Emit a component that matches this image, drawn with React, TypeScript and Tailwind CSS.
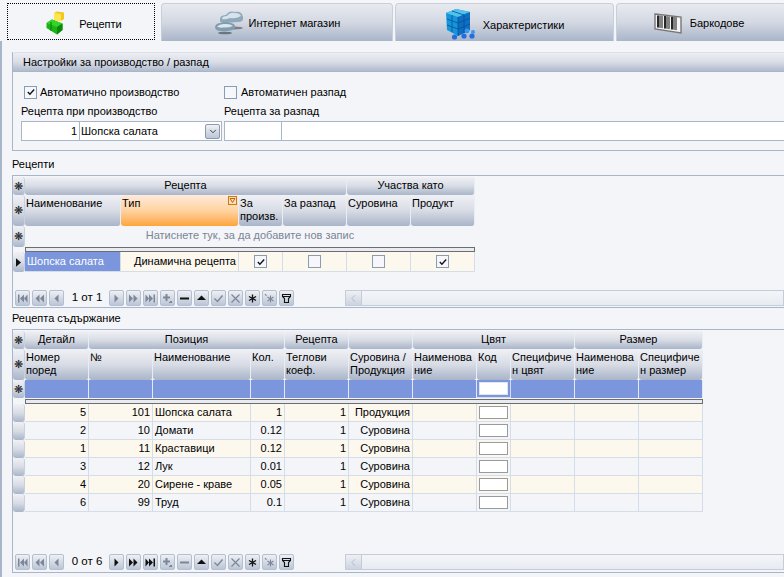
import React from "react";

const hdr = "bg-gradient-to-b from-[#f0f1f5] via-[#d8dce5] to-[#a9b5c9] rounded-[3px]";

function CheckBox({ on, size = "w-[13px] h-[13px]" }: { on?: boolean; size?: string }) {
  return (
    <span className={`${size} border border-[#8a9bb4] bg-[#f6f7fa] flex items-center justify-center shrink-0`}>
      {on && (
        <svg viewBox="0 0 11 11" className="w-[10px] h-[10px]">
          <path d="M2 5.5 L4.3 8 L9 2.8" fill="none" stroke="#111" strokeWidth="1.5" />
        </svg>
      )}
    </span>
  );
}

function CubesIcon() {
  return (
    <svg viewBox="0 0 19 24" className="w-[19px] h-[24px]">
      <path d="M8 2 L11 0.5 L18 1.5 L18 8 L15 10 L8 9Z" fill="#f2c81a" />
      <path d="M8 2 L15 3 L18 1.5 L15 3 L15 10 L8 9Z" fill="#ffe450" />
      <path d="M0.5 12 L6 8.5 L16.5 12.5 L16.5 19 L11 23.5 L0.5 17Z" fill="#1bb414" />
      <path d="M0.5 12 L11 16 L16.5 12.5 L6 8.5Z" fill="#35d42a" />
      <path d="M11 16 L16.5 12.5 L16.5 19 L11 23.5Z" fill="#0a8a0c" />
      <path d="M5 11 L5 20" stroke="#0a7a0c" strokeWidth="1" />
    </svg>
  );
}
function CloudIcon() {
  return (
    <svg viewBox="0 0 30 25" className="w-[30px] h-[25px]">
      <ellipse cx="20" cy="18" rx="9" ry="1.5" fill="#7a7f88" />
      <path d="M6 11 Q5 5 12 5 Q15 0 21 2 Q28 1 29 7 Q30 12 24 12 L10 13 Q6 13 6 11Z" fill="#8fa9ba" />
      <path d="M8 9 Q8 6 13 6 Q16 2 21 3 Q26 3 27 6 Q22 9 16 8 Q11 10 8 9Z" fill="#d6e3ea" />
      <path d="M1 18 Q1 13 7 13 Q12 11 17 13 Q22 14 21 18 Q19 21 12 21 Q3 22 1 18Z" fill="#7f9dae" />
      <path d="M3 16.5 Q6 13.5 11 14 Q16 13.5 19 16 Q14 18 9 17.5 Q5 18 3 16.5Z" fill="#dbe7ed" />
      <ellipse cx="11" cy="23" rx="7" ry="1.3" fill="#6c7680" />
    </svg>
  );
}
function BlueCube() {
  return (
    <svg viewBox="0 0 32 32" className="w-[32px] h-[32px]">
      <path d="M1 5 L11 1 L25 4 L25 22 L13 28 L2 22Z" fill="#1596d8" />
      <path d="M1 5 L13 9 L25 4 L11 1Z" fill="#4fc3ec" />
      <path d="M13 9 L25 4 L25 22 L13 28Z" fill="#0d6fc0" />
      <path d="M7 3 L19 7 M7 7 L7 24 M13 9 L13 28 M19 7 L19 25 M2 11 L13 15 L25 10 M2 17 L13 21 L25 16" stroke="#0a4f9c" strokeWidth="0.8" fill="none" />
      <circle cx="9.5" cy="29" r="2.6" fill="#1f6fe0" />
      <circle cx="19" cy="28" r="2.6" fill="#1f6fe0" />
      <circle cx="27" cy="28" r="2.6" fill="#1f6fe0" />
      <circle cx="22" cy="23" r="2.4" fill="#3c96ee" />
      <circle cx="28" cy="24" r="2" fill="#3c96ee" />
    </svg>
  );
}
function BarcodeIcon() {
  const bars = [4, 6, 8, 11, 13, 15, 18, 20, 22];
  return (
    <svg viewBox="0 0 28 22" className="w-[28px] h-[22px]">
      <path d="M1 2 L27 5 L27 21 L1 17Z" fill="#f4f4f4" stroke="#777" strokeWidth="1.4" />
      {bars.map((x, i) => (
        <path key={x} d={`M${x} ${3 + x * 0.1} L${x} ${15 + x * 0.14}`} stroke="#111" strokeWidth={i % 3 === 0 ? 1.8 : 1} />
      ))}
    </svg>
  );
}

function Tab({ w, active, icon, label, iconBox, gap }: { w: string; active?: boolean; icon: React.ReactNode; label: string; iconBox: string; gap: string }) {
  const inner = (
    <>
      <span className={`${iconBox} flex items-center justify-center shrink-0`}>{icon}</span>
      <span className="pt-[2px]">{label}</span>
    </>
  );
  if (active) {
    return (
      <div className={`${w} shrink-0 h-[38px] mt-[3px] bg-[#f3f5f8] rounded-t-[4px] px-[4px] pb-[1px]`}>
        <div className={`h-full border border-dotted border-black flex items-center justify-center ${gap}`}>{inner}</div>
      </div>
    );
  }
  return (
    <div className={`${w} shrink-0 h-[38px] mt-[3px] flex items-center justify-center rounded-t-[4px] border border-b-0 border-[#c8cfdb] bg-gradient-to-b from-[#e8eaef] via-[#d3d8e2] to-[#a9b5c9] ${gap}`}>
      {inner}
    </div>
  );
}

const G1 = "grid-cols-[12px_96px_118px_44px_64px_64px_64px]";
const G2 = "grid-cols-[12px_64px_64px_98px_34px_64px_64px_64px_34px_64px_64px_64px]";

function HeadCell({ children, span, orange, filter }: { children?: React.ReactNode; span?: string; orange?: boolean; filter?: boolean }) {
  return (
    <div
      className={`${span ?? ""} relative border-r border-[#e8edf4] rounded-[3px] px-[1px] leading-[13px] pt-[2px] ${
        orange ? "bg-gradient-to-b from-[#ffeadb] via-[#ffd3a0] to-[#ffa436]" : hdr
      }`}
    >
      {children}
      {filter && (
        <span className="absolute right-[1px] top-[1px] w-[9px] h-[9px] border border-[#c87a20] bg-[#ffe2b0] flex items-center justify-center">
          <svg viewBox="0 0 7 7" className="w-[7px] h-[7px]"><path d="M1 1.5 H6 L3.5 5.5Z" fill="none" stroke="#c0601a" strokeWidth="1" /></svg>
        </span>
      )}
    </div>
  );
}

function Band({ children, span }: { children?: React.ReactNode; span: string }) {
  return <div className={`${span} ${hdr} border-r border-[#e8edf4] flex items-center justify-center pb-[2px]`}>{children}</div>;
}

function Indicator({ kind }: { kind?: "star" | "arrow" }) {
  return (
    <div className={`${hdr} border-r border-[#c8d0dc] flex items-center justify-center text-[9px] leading-none`}>
      {kind === "star" && <span className="text-[11px] leading-none text-[#222]">❋</span>}
      {kind === "arrow" && (
        <svg viewBox="0 0 6 10" className="w-[5px] h-[9px]"><path d="M0 0 L6 5 L0 10Z" fill="#111" /></svg>
      )}
    </div>
  );
}

function Sep() {
  return <div className="h-[5px] border border-[#6e6e6e] bg-[#e8ecf2]" />;
}

const navPaths: Record<string, React.ReactNode> = {
  first: <path d="M1 1.5 H2.5 V9.5 H1Z M7 1.5 L3 5.5 L7 9.5Z M10.5 1.5 L7 5.5 L10.5 9.5Z" />,
  prevPage: <path d="M5.5 1.5 L1.5 5.5 L5.5 9.5Z M10 1.5 L6 5.5 L10 9.5Z" />,
  prev: <path d="M7.5 1.5 L3.5 5.5 L7.5 9.5Z" />,
  next: <path d="M3.5 1.5 L7.5 5.5 L3.5 9.5Z" />,
  nextPage: <path d="M1 1.5 L5 5.5 L1 9.5Z M5.5 1.5 L9.5 5.5 L5.5 9.5Z" />,
  last: <path d="M0.5 1.5 L4 5.5 L0.5 9.5Z M4 1.5 L8 5.5 L4 9.5Z M8.5 1.5 H10 V9.5 H8.5Z" />,
  add: <path d="M3.5 1 H5.5 V3.5 H8 V5.5 H5.5 V8 H3.5 V5.5 H1 V3.5 H3.5Z M8 8 H10 V10 H7 V9 H8Z" />,
  minus: <path d="M1 4.5 H10 V6.5 H1Z" />,
  up: <path d="M5.5 2.5 L10 7 H1Z" />,
  check: <path d="M1.5 5.5 L4.5 8.5 L9.5 2.5" fill="none" stroke="currentColor" strokeWidth="1.4" />,
  x: <path d="M1.5 1.5 L9.5 9.5 M9.5 1.5 L1.5 9.5" fill="none" stroke="currentColor" strokeWidth="1.2" />,
  star: <path d="M5.5 1.5 V9.5 M2 3.5 L9 7.5 M9 3.5 L2 7.5" fill="none" stroke="currentColor" strokeWidth="1.3" />,
  star2: <path d="M6.5 2.5 V9.5 M3.5 4 L9.5 8 M9.5 4 L3.5 8 M1 1 L2.5 3" fill="none" stroke="currentColor" strokeWidth="1.1" />,
  filter: <path d="M1.5 1.5 H9.5 V3.5 L7.5 5.5 V9.5 H3.5 V5.5 L1.5 3.5Z M1.5 3.5 H9.5" fill="none" stroke="currentColor" strokeWidth="1.1" />,
};

function NavBtn({ name, on }: { name: string; on?: boolean }) {
  return (
    <span
      className={`w-[15px] h-[16px] mr-[2px] shrink-0 rounded-[2px] border border-[#b4bfd0] bg-gradient-to-b from-[#eef0f4] to-[#bcc6d6] flex items-center justify-center ${
        on ? "text-[#111]" : "text-[#7d8799]"
      }`}
    >
      <svg viewBox="0 0 11 11" className="w-[11px] h-[11px]" fill="currentColor">
        {navPaths[name]}
      </svg>
    </span>
  );
}

function Navigator({ text, nextOn, minusOn }: { text: string; nextOn?: boolean; minusOn?: boolean }) {
  return (
    <div className="flex items-center h-[16px] mb-[1px] pl-[2px]">
      <NavBtn name="first" />
      <NavBtn name="prevPage" />
      <NavBtn name="prev" />
      <span className="w-[42px] text-center text-[11.5px] text-black mr-[1px] whitespace-nowrap">{text}</span>
      <NavBtn name="next" on={nextOn} />
      <NavBtn name="nextPage" on={nextOn} />
      <NavBtn name="last" on={nextOn} />
      <NavBtn name="add" />
      <NavBtn name="minus" on={minusOn} />
      <NavBtn name="up" on />
      <NavBtn name="check" />
      <NavBtn name="x" />
      <NavBtn name="star" on />
      <NavBtn name="star2" />
      <NavBtn name="filter" on />
      <div className="ml-[49px] flex-1 h-[16px] border border-[#c4ccd9] bg-white flex">
        <span className="w-[16px] border-r border-[#c4ccd9] bg-gradient-to-b from-[#eef0f4] to-[#cdd4e0] flex items-center justify-center">
          <svg viewBox="0 0 6 10" className="w-[5px] h-[9px]"><path d="M5 1 L1 5 L5 9" fill="none" stroke="#a9b2c2" /></svg>
        </span>
        <span className="flex-1 bg-gradient-to-b from-[#f4f5f8] to-[#e7ebf1]" />
      </div>
    </div>
  );
}

const data = [
  ["5", "101", "Шопска салата", "1", "1", "Продукция"],
  ["2", "10", "Домати", "0.12", "1", "Суровина"],
  ["1", "11", "Краставици", "0.12", "1", "Суровина"],
  ["3", "12", "Лук", "0.01", "1", "Суровина"],
  ["4", "20", "Сирене - краве", "0.05", "1", "Суровина"],
  ["6", "99", "Труд", "0.1", "1", "Суровина"],
];

function Td({ children, cls }: { children?: React.ReactNode; cls?: string }) {
  return <div className={`border-r border-b border-[#d5dde9] flex items-center px-[2px] whitespace-nowrap overflow-hidden ${cls ?? ""}`}>{children}</div>;
}

function ColorBox({ white, bg }: { white?: boolean; bg?: string }) {
  return (
    <div className={`border-r border-b border-[#d5dde9] flex items-center justify-center ${bg ?? ""}`}>
      <span className={`w-[29px] h-[13px] bg-white border ${white ? "border-[#dfe5f0]" : "border-[#9a9a9a]"}`} />
    </div>
  );
}

export default function App() {
  return (
    <div
      className="w-[784px] h-[577px] overflow-hidden bg-[#f3f5f8] text-black text-[11px] flex flex-col"
      style={{ fontFamily: '"Liberation Sans", Arial, sans-serif' }}
    >
      <div className="h-[41px] flex shrink-0 pl-[3px] gap-[2px]">
        <Tab w="w-[156px]" active icon={<CubesIcon />} label="Рецепти" iconBox="w-[19px] h-[24px]" gap="gap-[14px] pl-[6px] pt-[3px]" />
        <Tab w="w-[232px]" icon={<CloudIcon />} label="Интернет магазин" iconBox="w-[30px] h-[25px]" gap="gap-[5px]" />
        <Tab w="w-[219px]" icon={<BlueCube />} label="Характеристики" iconBox="w-[32px] h-[32px]" gap="gap-[6px] pt-[3px]" />
        <Tab w="w-[170px]" icon={<BarcodeIcon />} label="Баркодове" iconBox="w-[28px] h-[22px]" gap="gap-[8px] pr-[4px]" />
      </div>

      <div className="flex-1 min-h-0 border-l-2 border-[#a9b5c9] pl-[10px] flex flex-col">
        <div className="mt-[11px] h-[99px] shrink-0 border-l border-b border-[#a9b5c9] flex flex-col">
          <div className="h-[20px] shrink-0 pl-[10px] flex items-center rounded-tl-[3px] border-t border-[#d9deea] border-b border-b-[#a9b5c9] bg-gradient-to-b from-[#eceef3] via-[#d9dde6] to-[#b0bbce]">
            Настройки за производство / разпад
          </div>
          <div className="flex-1 pl-[8px]">
            <div className="flex mt-[13px] h-[14px] items-center">
              <div className="w-[203px] pl-[3px] flex items-center gap-[3px]"><CheckBox on />Автоматично производство</div>
              <div className="flex items-center gap-[4px]"><CheckBox />Автоматичен разпад</div>
            </div>
            <div className="flex mt-[5px] h-[14px] items-center">
              <div className="w-[203px]">Рецепта при производство</div>
              <div>Рецепта за разпад</div>
            </div>
            <div className="flex mt-[3px] h-[20px]">
              <div className="w-[58px] bg-white border-y border-l border-[#a9b5c9] text-right pr-[2px] leading-[18px]">1</div>
              <div className="w-[143px] bg-white border border-[#a9b5c9] flex items-center pl-[1px] justify-between pr-[1px]">
                <span>Шопска салата</span>
                <span className="w-[15px] h-[15px] border border-[#8c9ab0] rounded-[2px] bg-gradient-to-b from-[#f0f2f5] to-[#bcc6d6] flex items-center justify-center">
                  <svg viewBox="0 0 9 6" className="w-[8px] h-[5px]"><path d="M1 1 L4.5 4.5 L8 1" fill="none" stroke="#222" strokeWidth="1" /></svg>
                </span>
              </div>
              <div className="w-[57px] ml-[2px] bg-white border-y border-l border-[#a9b5c9]" />
              <div className="flex-1 bg-white border-y border-l border-[#a9b5c9]" />
            </div>
          </div>
        </div>

        <div className="mt-[6px] h-[14px] shrink-0 flex items-center leading-none">Рецепти</div>
        <div className="mt-[4px] h-[133px] shrink-0 border border-r-0 border-[#a9b5c9] flex flex-col">
          <div className={`grid ${G1} grid-rows-[18px_31px_21px] w-[462px] gap-y-0 pt-[1px] box-content`}>
            <Indicator kind="star" />
            <Band span="col-span-4">Рецепта</Band>
            <Band span="col-span-2">Участва като</Band>
            <Indicator kind="star" />
            <HeadCell>Наименование</HeadCell>
            <HeadCell orange filter>Тип</HeadCell>
            <HeadCell>За произв.</HeadCell>
            <HeadCell>За разпад</HeadCell>
            <HeadCell>Суровина</HeadCell>
            <HeadCell>Продукт</HeadCell>
            <Indicator kind="star" />
            <div className="col-span-6 flex items-center justify-center pb-[2px] text-[#7b8494]">Натиснете тук, за да добавите нов запис</div>
          </div>
          <div className="w-[462px] pl-[12px]"><Sep /></div>
          <div className={`grid ${G1} grid-rows-[20px] w-[462px]`}>
            <Indicator kind="arrow" />
            <Td cls="bg-[#7b96dc] text-white">Шопска салата</Td>
            <Td cls="bg-[#fdf8ee] justify-end">Динамична рецепта</Td>
            <Td cls="bg-[#fdf8ee] justify-center"><CheckBox on /></Td>
            <Td cls="bg-[#fdf8ee] justify-center"><CheckBox /></Td>
            <Td cls="bg-[#fdf8ee] justify-center"><CheckBox /></Td>
            <Td cls="bg-[#fdf8ee] justify-center"><CheckBox on /></Td>
          </div>
          <div className="mt-auto"><Navigator text="1 от 1" minusOn /></div>
        </div>

        <div className="mt-[3px] h-[14px] shrink-0 flex items-center leading-none">Рецепта съдържание</div>
        <div className="mt-[4px] flex-1 min-h-0 mb-[4px] border border-r-0 border-[#a9b5c9] flex flex-col">
          <div className={`grid ${G2} grid-rows-[18px_31px_18px] w-[690px] pt-[1px] box-content`}>
            <Indicator kind="star" />
            <Band span="col-span-1">Детайл</Band>
            <Band span="col-span-3">Позиция</Band>
            <Band span="col-span-1">Рецепта</Band>
            <Band span="col-span-1"></Band>
            <Band span="col-span-3">Цвят</Band>
            <Band span="col-span-2">Размер</Band>
            <Indicator kind="star" />
            <HeadCell>Номер<br />поред</HeadCell>
            <HeadCell>№</HeadCell>
            <HeadCell>Наименование</HeadCell>
            <HeadCell>Кол.</HeadCell>
            <HeadCell>Теглови<br />коеф.</HeadCell>
            <HeadCell>Суровина /<br />Продукция</HeadCell>
            <HeadCell>Наименова<br />ние</HeadCell>
            <HeadCell>Код</HeadCell>
            <HeadCell>Специфиче<br />н цвят</HeadCell>
            <HeadCell>Наименова<br />ние</HeadCell>
            <HeadCell>Специфиче<br />н размер</HeadCell>
            <Indicator kind="star" />
            {[0, 1, 2, 3, 4, 5, 6].map((i) => (
              <div key={i} className="bg-[#7b96dc] border-r border-[#e4e9f3]" />
            ))}
            <ColorBox white bg="bg-[#7b96dc]" />
            {[0, 1, 2].map((i) => (
              <div key={i} className="bg-[#7b96dc] border-r border-[#e4e9f3]" />
            ))}
          </div>
          <div className="w-[690px] pl-[12px] mt-[1px]"><Sep /></div>
          <div className={`grid ${G2} auto-rows-[18px] w-[690px]`}>
            {data.flatMap((r, i) => {
              const bg = i % 2 === 0 ? "bg-[#fdf8ee]" : "bg-[#f3f5f8]";
              return [
                <Indicator key={`i${i}`} />,
                <Td key={`a${i}`} cls={`${bg} justify-end`}>{r[0]}</Td>,
                <Td key={`b${i}`} cls={`${bg} justify-end`}>{r[1]}</Td>,
                <Td key={`c${i}`} cls={bg}>{r[2]}</Td>,
                <Td key={`d${i}`} cls={`${bg} justify-end`}>{r[3]}</Td>,
                <Td key={`e${i}`} cls={`${bg} justify-end`}>{r[4]}</Td>,
                <Td key={`f${i}`} cls={`${bg} justify-end`}>{r[5]}</Td>,
                <Td key={`g${i}`} cls={bg} />,
                <ColorBox key={`h${i}`} bg={bg} />,
                <Td key={`j${i}`} cls={bg} />,
                <Td key={`k${i}`} cls={bg} />,
                <Td key={`l${i}`} cls={bg} />,
              ];
            })}
          </div>
          <div className="mt-auto mb-[1px]"><Navigator text="0 от 6" nextOn /></div>
        </div>
      </div>
    </div>
  );
}
